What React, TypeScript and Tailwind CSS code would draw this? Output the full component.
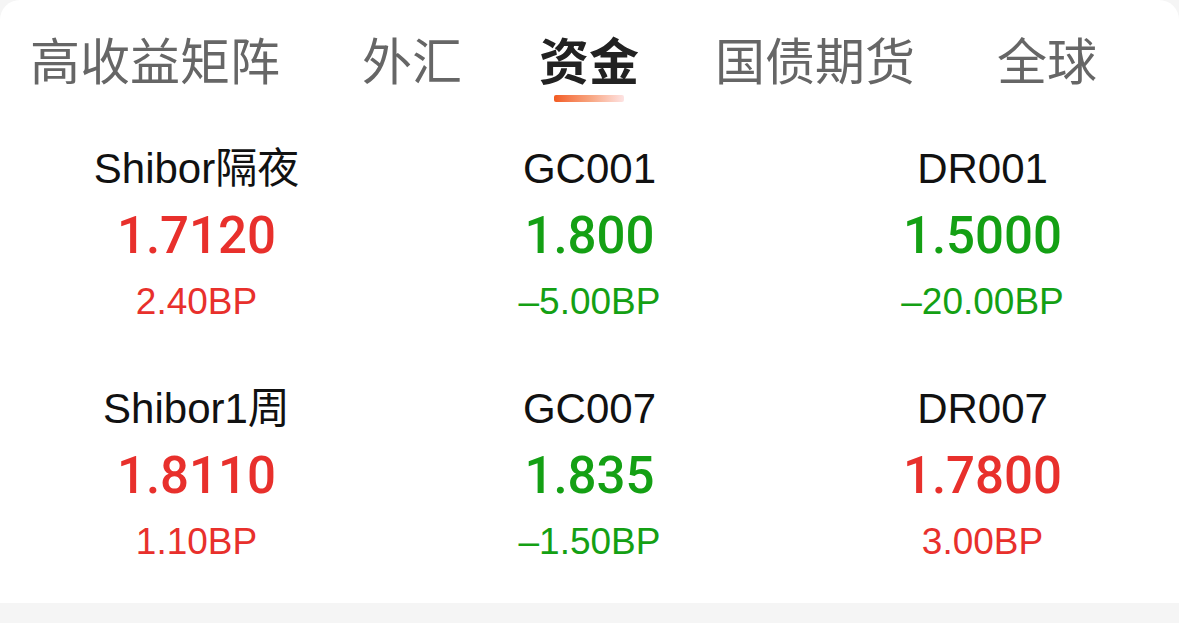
import React from 'react';

type Quote = {
  name: string;
  value: string;
  change: string;
  up: boolean;
};

// tab label + left margin tuned to the screenshot
const tabs = [
  { label: '高收益矩阵', ml: '' },
  { label: '外汇', ml: 'ml-[82px]' },
  { label: '资金', ml: 'ml-[77px]' },
  { label: '国债期货', ml: 'ml-[76px]' },
  { label: '全球', ml: 'ml-[82px]' },
];
const activeTab = '资金';

const quotes: Quote[] = [
  { name: 'Shibor隔夜', value: '1.7120', change: '2.40BP', up: true },
  { name: 'GC001', value: '1.800', change: '–5.00BP', up: false },
  { name: 'DR001', value: '1.5000', change: '–20.00BP', up: false },
  { name: 'Shibor1周', value: '1.8110', change: '1.10BP', up: true },
  { name: 'GC007', value: '1.835', change: '–1.50BP', up: false },
  { name: 'DR007', value: '1.7800', change: '3.00BP', up: true },
];

const font = { fontFamily: '"Liberation Sans", "Noto Sans CJK SC", sans-serif' };

const App: React.FC = () => {
  return (
    <div className="w-[1179px] h-[623px] bg-[#f5f5f5] overflow-hidden" style={font}>
      <div className="bg-white rounded-t-[20px] h-[603px]">
        <div className="flex pl-[30px] pt-[28px]">
          {tabs.map((tab) => {
            const active = tab.label === activeTab;
            return (
              <div key={tab.label} className={`flex flex-col items-center ${tab.ml}`}>
                <span
                  className={`text-[50px] leading-[60px] ${active ? 'font-bold text-[#222222]' : 'text-[#666666]'}`}
                  style={{ fontFamily: '"Noto Sans CJK SC", sans-serif' }}
                >
                  {tab.label}
                </span>
                <div
                  className={`mt-[7px] h-[7px] w-[70px] rounded-[2px] ${active ? 'bg-gradient-to-r from-[#f25a1e] via-[#f7a27c] to-[#fde3e3]' : 'bg-transparent'}`}
                />
              </div>
            );
          })}
        </div>
        <div className="grid grid-cols-3 gap-y-[61px] mt-[43px]">
          {quotes.map((q) => {
            const color = q.up ? 'text-[#e8302c]' : 'text-[#14a014]';
            return (
              <div key={q.name} className="flex flex-col items-center">
                <span className="text-[42px] leading-[48px] text-[#111111]">{q.name}</span>
                <span
                  className={`mt-[13px] text-[51px] leading-[60px] font-medium ${color}`}
                  style={{ fontFamily: 'Roboto, "Liberation Sans", sans-serif' }}
                >
                  {q.value}
                </span>
                <span className={`mt-[14px] text-[37px] leading-[44px] ${color}`}>{q.change}</span>
              </div>
            );
          })}
        </div>
      </div>
    </div>
  );
};

export default App;
